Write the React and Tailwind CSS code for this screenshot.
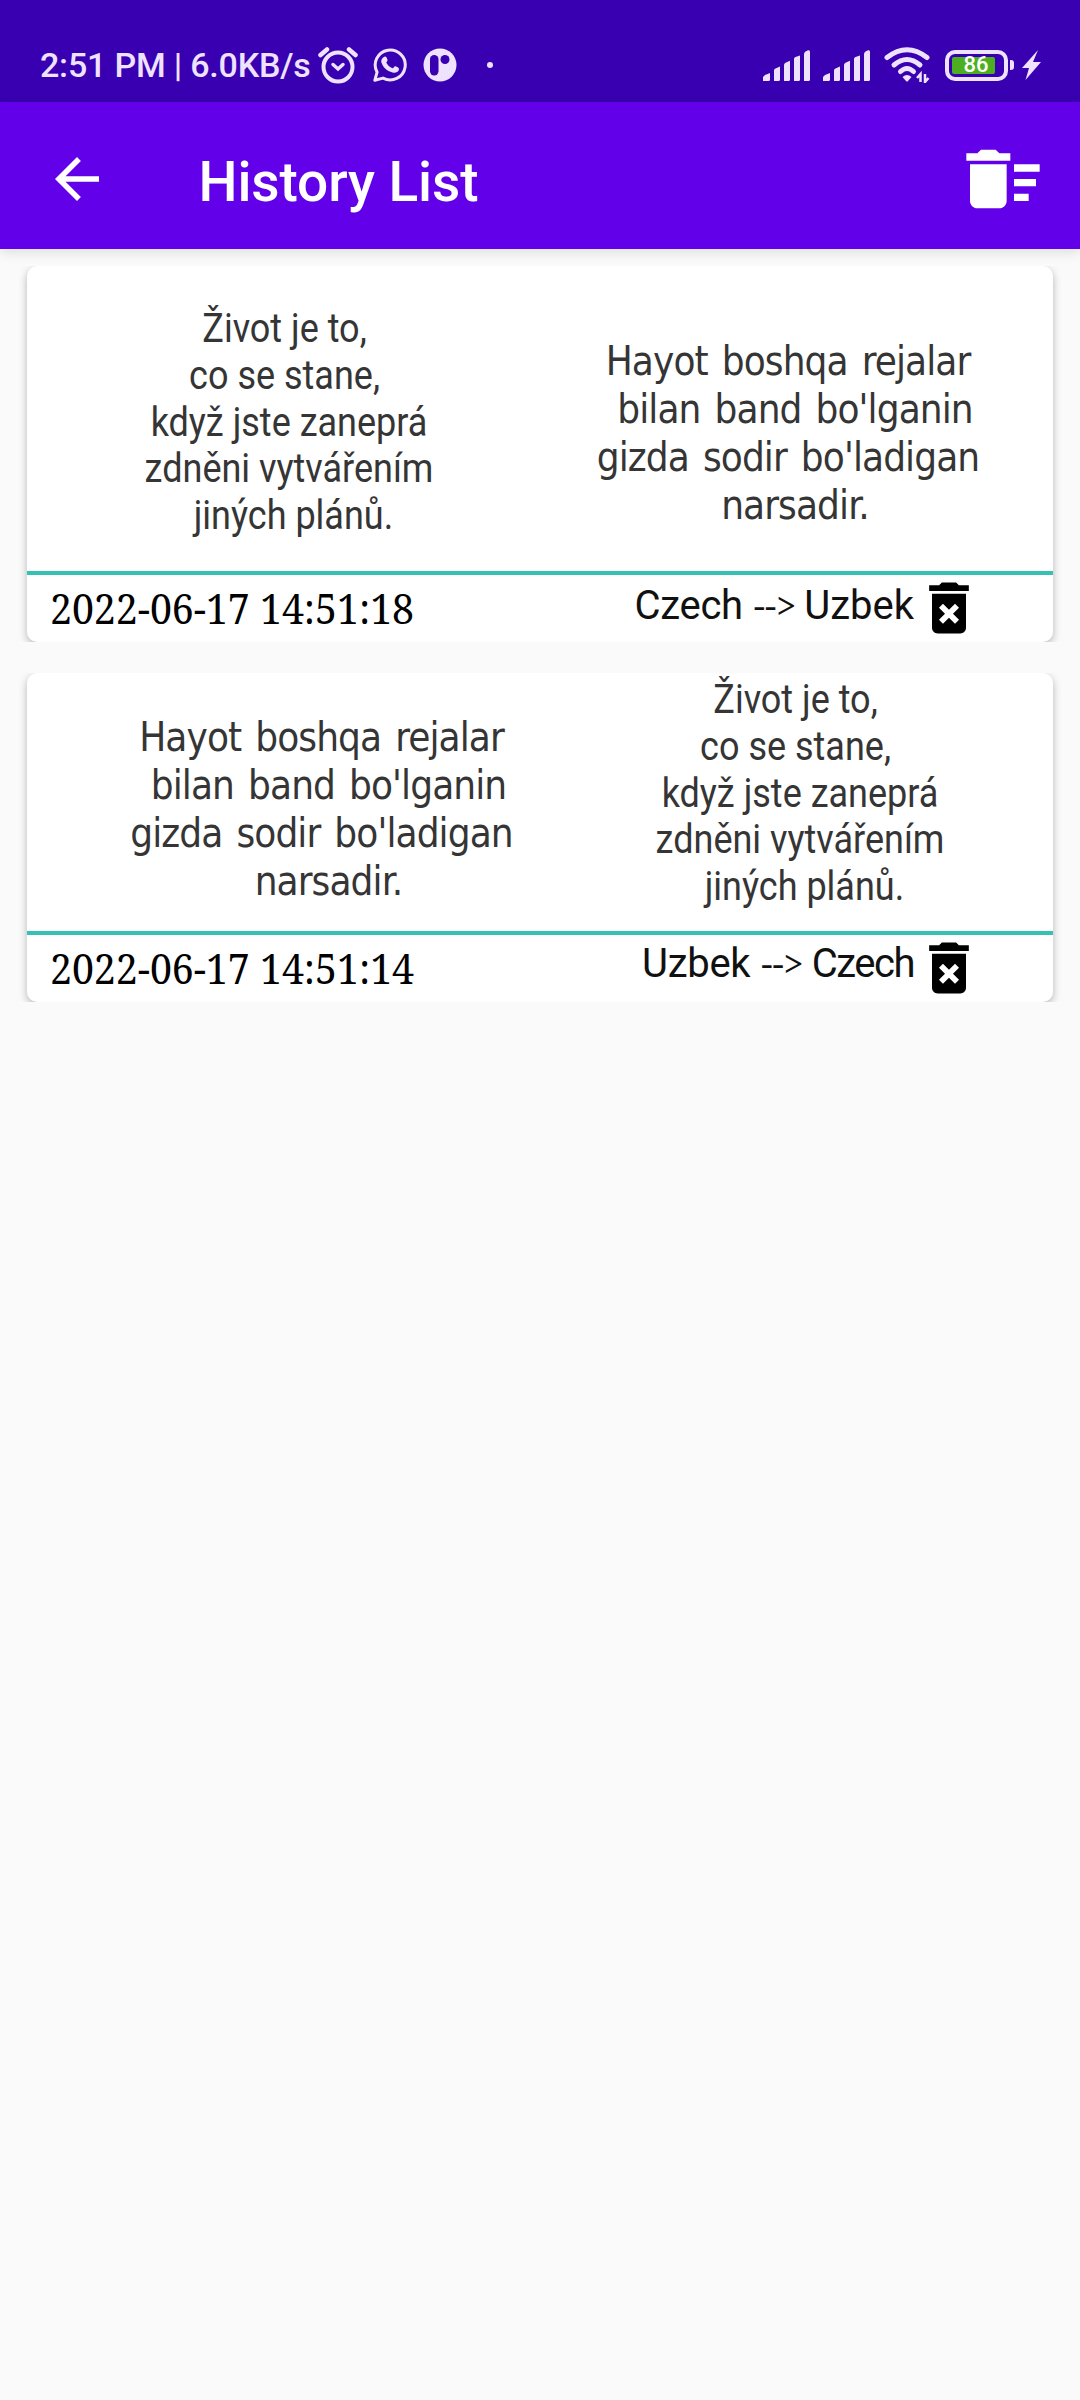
import React from 'react';
import { MdArrowBack, MdDeleteForever, MdDeleteSweep } from 'react-icons/md';

const czechLines = ['Život je to, ', 'co se stane, ', 'když jste zaneprá', 'zdněni vytvářením', ' jiných plánů.'];
const uzbekLines = ['Hayot boshqa rejalar', " bilan band bo'lganin", "gizda sodir bo'ladigan", ' narsadir.'];

const CzechText = ({ className }) => (
  <div className={`origin-center scale-x-[0.9] whitespace-pre text-center font-[Roboto,sans-serif] text-[40px] leading-[46.8px] text-[#353535] ${className}`}>
    {czechLines.map((line) => (
      <p key={line}>{line}</p>
    ))}
  </div>
);

const UzbekText = ({ className }) => (
  <div className={`whitespace-pre text-center font-['DejaVu_Sans_Condensed','DejaVu_Sans',sans-serif] text-[40px] leading-[48px] tracking-[-0.9px] [word-spacing:3.5px] text-[#353535] ${className}`}>
    {uzbekLines.map((line) => (
      <p key={line}>{line}</p>
    ))}
  </div>
);

const SignalIcon = () => (
  <svg viewBox="0 0 48 31" className="h-[31px] w-[48px]" fill="#efe2ff">
    <path d="M0 31v-4l2-2 5-2v6.500q0 1.500-1.500 1.500z" />
    <path d="M11 31V20.500q0-1.500 1.500-2l4.500-2v13q0 1.500-1.500 1.500h-4.500z" />
    <path d="M21 31V15q0-1.500 1.500-2.200l4.500-2v18.700q0 1.500-1.500 1.500h-4.500z" />
    <path d="M31 31V9q0-1.500 1.500-2l4.500-1.500v24q0 1.500-1.500 1.500h-4.500z" />
    <path d="M41 31V4q0-1.500 1.500-2.500L45 .3q2-.6 2 1.400v27.800q0 1.500-1.500 1.500h-4.500z" />
  </svg>
);

const HistoryCard = ({ date, from, to, bodyClass, labelClass, toClass, children }) => (
  <div className="mx-[19px] overflow-hidden px-2">
    <div className="rounded-[10px] bg-white shadow-[0_3px_9px_rgba(0,0,0,0.28)]">
      <div className={`flex border-b-4 border-[#35c1b3] ${bodyClass}`}>{children}</div>
      <div className="flex h-[67px] pl-[23px]">
        <div className="w-[560px]">
          <p className="mt-[7px] w-[400px] origin-left scale-x-[0.957] font-['Noto_Serif','DejaVu_Serif_Condensed','DejaVu_Serif',serif] text-[41px] leading-[52px] whitespace-nowrap text-black">
            {date}
          </p>
        </div>
        <div className={`flex w-[304px] items-baseline justify-end font-[Roboto,sans-serif] text-[40px] whitespace-nowrap text-[#111] ${labelClass}`}>
          <span className="tracking-[-0.3px]">{from}</span>
          <span className="mr-[8px] ml-[11px] font-['Noto_Serif','Liberation_Serif',serif] text-[36px]">{'-->'}</span>
          <span className={toClass}>{to}</span>
        </div>
        <MdDeleteForever className="-mt-[1px] ml-[1px] h-[68px] w-[68px] text-black" />
      </div>
    </div>
  </div>
);

const App = () => (
  <div className="h-[2400px] w-[1080px] overflow-hidden bg-[#fafafa]">
    {/* Status bar */}
    <div className="flex h-[102px] items-center bg-[#3800b1] pt-[28px] pl-[40px] text-[#efe2ff]">
      <span className="w-[278px] font-[Roboto,sans-serif] text-[34px] leading-[40px] font-medium tracking-[-0.2px] whitespace-nowrap">
        2:51 PM | 6.0KB/s
      </span>
      {/* Alarm */}
      <svg viewBox="0 0 40 38" className="h-[38px] w-[40px]" fill="none" stroke="#efe2ff">
        <circle cx="20" cy="21" r="14.500" strokeWidth="4" />
        <path d="M2.500 9 9 3.500M37.500 9 31 3.500" strokeWidth="4.500" strokeLinecap="round" />
        <path d="m15 18.500 5 4.500 5-4.500" strokeWidth="3.500" strokeLinecap="round" />
      </svg>
      {/* WhatsApp */}
      <svg viewBox="0 0 34 34" className="ml-[15px] h-[34px] w-[34px]" fill="none" stroke="#efe2ff">
        <path d="M1.800 32.300l2.300-8.100A15 15 0 1 1 10 30.100z" strokeWidth="3" strokeLinejoin="round" />
        <path d="M10.500 9.200c2-1.700 3-.6 4 2.500.6 1.500-1.700 2.300-1 3.300 1.500 2.500 3.300 4.200 5.900 5.200 1 .3 2-2.500 3.100-2 3 1.300 4 1.800 3.300 3.800-.8 2.400-3.700 3.200-6.200 2.500-6-1.700-9.300-5-11.200-10-.7-2 .6-4.200 2.100-5.300z" fill="#efe2ff" stroke="none" />
      </svg>
      {/* App badge */}
      <svg viewBox="0 0 34 34" className="ml-[16px] h-[34px] w-[34px]">
        <circle cx="17" cy="17" r="16.500" fill="#efe2ff" />
        <rect x="7" y="7" width="8.500" height="20.500" rx="4.200" fill="#3800b1" />
        <circle cx="22" cy="11.500" r="4.500" fill="#3800b1" />
      </svg>
      <div className="ml-[30px] h-[6px] w-[6px] rounded-full bg-[#efe2ff]" />
      <div className="ml-[270px] flex items-center">
        <SignalIcon />
        <div className="w-[12px]" />
        <SignalIcon />
        <svg viewBox="0 0 46 36" className="ml-[13px] h-[36px] w-[46px]" fill="none" stroke="#efe2ff">
          <g strokeWidth="5" strokeLinecap="round">
            <path d="M3 10.500Q23 -5 43 10.500" />
            <path d="M10 18Q23 7 36 18" />
            <path d="M16.500 24.500Q23 18.500 29.500 24.500" />
          </g>
          <path d="M18.500 30q4.500-4 9 0l-3.500 4q-1 1-2 0z" fill="#efe2ff" stroke="none" />
          <path d="M36.500 35V27l-3.500 4M41 27v8l3.500-4" strokeWidth="2.500" />
        </svg>
      </div>
      {/* Battery */}
      <div className="ml-[15px] flex h-[31px] w-[63px] items-center rounded-[10px] border-4 border-[#efe2ff] px-[3px]">
        <div className="flex h-[17px] w-[43px] items-center justify-center rounded-[2px] bg-[#4caf1f] pl-[5px] font-[Roboto,sans-serif] text-[22px] leading-none font-medium text-white">
          86
        </div>
      </div>
      <div className="ml-[2px] h-[10px] w-[4px] rounded-r-[3px] bg-[#efe2ff]" />
      <svg viewBox="0 0 19 30" className="ml-[8px] h-[30px] w-[19px]" fill="#efe2ff">
        <path d="M16 0 0 18h7L3.500 30 19 12h-8z" />
      </svg>
    </div>

    {/* Toolbar */}
    <div className="flex h-[147px] items-center bg-[#6200ea] shadow-[0_3px_12px_rgba(0,0,0,0.12)]">
      <MdArrowBack className="mt-[7px] ml-[44px] h-[66px] w-[66px] text-white" />
      <h1 className="ml-[88.5px] mt-[12px] font-[Roboto,sans-serif] text-[55px] leading-[64px] font-medium tracking-[-0.1px] whitespace-nowrap text-white">
        History List
      </h1>
      <MdDeleteSweep className="mt-[7px] mr-[33px] ml-auto h-[88px] w-[88px] text-white" />
    </div>

    {/* History entries */}
    <div className="flex flex-col gap-[31px] pt-[17px]">
      <HistoryCard date="2022-06-17 14:51:18" from="Czech" to="Uzbek" bodyClass="h-[309px]" labelClass="leading-[62px]">
        <CzechText className="mt-[40px] w-[524px]" />
        <UzbekText className="mt-[71px] w-[474px]" />
      </HistoryCard>
      <HistoryCard date="2022-06-17 14:51:14" from="Uzbek" to="Czech" bodyClass="h-[262px]" labelClass="leading-[58px]" toClass="tracking-[-1.5px]">
        <UzbekText className="mt-[40px] w-[589px]" />
        <CzechText className="mt-[4px] w-[368px]" />
      </HistoryCard>
    </div>
  </div>
);

export default App;
